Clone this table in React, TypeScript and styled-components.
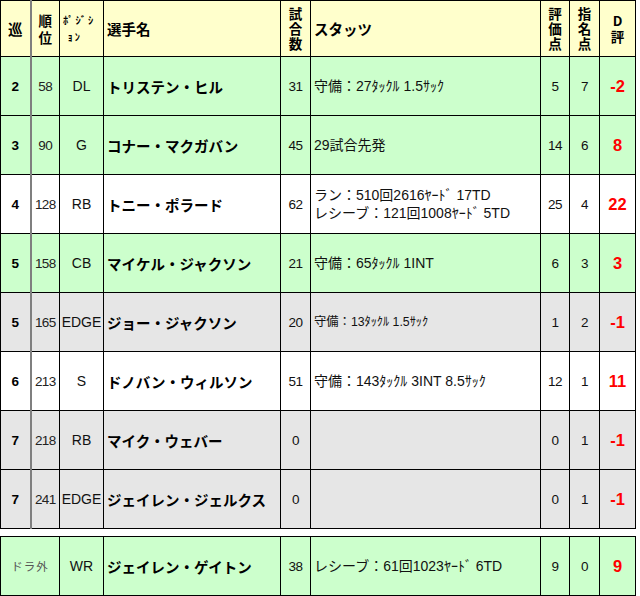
import styled, { createGlobalStyle } from "styled-components"
import { FC, ReactNode } from "react"

const GlobalStyle = createGlobalStyle`
    html, body { margin: 0; padding: 0; background: #fff; }
    body { font-family: "Liberation Sans", "Noto Sans CJK JP", sans-serif; color: #000; }
`

const colors = {
    head: '#FFFFCC',
    green: '#CCFFCC',
    white: '#FFFFFF',
    grey: '#E6E6E6',
    red: '#FF0000',
} as const

type Bg = 'green' | 'white' | 'grey'

const Page = styled.div({
    display: 'flex',
    flexDirection: 'column',
    gap: 7,
    width: 636,
})

const Table = styled.table({
    borderCollapse: 'collapse',
    tableLayout: 'fixed',
    width: 636,
})

const Col = styled.col<{ $w: number }>(p => ({ width: p.$w }))

const HeadRow = styled.tr({
    height: 56,
    backgroundColor: colors.head,
})

const Row = styled.tr<{ $bg: Bg }>(p => ({
    height: 59,
    backgroundColor: colors[p.$bg],
}))

const baseCell = {
    border: '1px solid #000',
    padding: 0,
    verticalAlign: 'middle' as const,
    overflow: 'hidden',
    whiteSpace: 'nowrap' as const,
}

const Th = styled.th<{ $left?: boolean; $grey?: boolean }>(p => ({
    ...baseCell,
    borderRight: p.$grey ? '2px solid #7f7f7f' : baseCell.border,
    textAlign: p.$left ? 'left' : 'center',
    paddingLeft: p.$left ? 3 : 0,
    fontFamily: '"Noto Sans CJK JP", sans-serif',
    fontWeight: 700,
    fontSize: 14.5,
    lineHeight: '17px',
}))

// one character per line, for the narrow header columns
const Stack = styled.span<{ $gap?: number }>(p => ({
    display: 'flex',
    flexDirection: 'column',
    alignItems: 'center',
    gap: p.$gap ?? 0,
    fontSize: 13.5,
    lineHeight: '15px',
}))

const SmallHead = styled.span({
    display: 'flex',
    flexDirection: 'column',
    alignItems: 'flex-start',
    gap: 5,
    fontSize: 10.5,
    lineHeight: '12px',
    letterSpacing: 2,
    paddingLeft: 3,
})

const Td = styled.td<{ $grey?: boolean }>(p => ({
    ...baseCell,
    borderRight: p.$grey ? '2px solid #7f7f7f' : baseCell.border,
    textAlign: 'center',
    fontSize: 13.5,
}))

const Round = styled(Td)({
    fontWeight: 700,
})

const Rank = styled(Td)({
    fontSize: 13.5,
    letterSpacing: -0.6,
    color: '#222',
})

const Pos = styled(Td)({
    fontSize: 14,
    color: '#111',
})

const Name = styled(Td)({
    textAlign: 'left',
    paddingLeft: 3,
    fontFamily: '"Noto Sans CJK JP", sans-serif',
    fontWeight: 700,
    fontSize: 14.5,
})

const Stats = styled(Td)<{ $small?: boolean }>(p => ({
    textAlign: 'left',
    paddingLeft: 3,
    fontFamily: '"Liberation Sans", "Noto Sans CJK JP", sans-serif',
    fontSize: p.$small ? 12.3 : 14,
    lineHeight: '18px',
    color: '#111',
}))

const Num = styled(Td)({
    fontSize: 13.5,
    letterSpacing: -0.6,
    color: '#111',
})

const Score = styled(Td)({
    color: colors.red,
    fontWeight: 700,
    fontSize: 16.5,
})

const Outside = styled(Td)({
    fontFamily: '"Noto Sans CJK JP", sans-serif',
    fontSize: 11.5,
    color: '#555',
    letterSpacing: 1,
})

interface Pick {
    round: string
    rank: string
    pos: string
    name: string
    games: string
    stats: ReactNode
    small?: boolean
    evalPt: string
    draftPt: string
    d: string
    bg: Bg
}

const picks: Pick[] = [
    { round: '2', rank: '58', pos: 'DL', name: 'トリステン・ヒル', games: '31', stats: '守備：27ﾀｯｸﾙ 1.5ｻｯｸ', evalPt: '5', draftPt: '7', d: '-2', bg: 'green' },
    { round: '3', rank: '90', pos: 'G', name: 'コナー・マクガバン', games: '45', stats: '29試合先発', evalPt: '14', draftPt: '6', d: '8', bg: 'green' },
    { round: '4', rank: '128', pos: 'RB', name: 'トニー・ポラード', games: '62', stats: <>ラン：510回2616ﾔｰﾄﾞ 17TD<br />レシーブ：121回1008ﾔｰﾄﾞ 5TD</>, evalPt: '25', draftPt: '4', d: '22', bg: 'white' },
    { round: '5', rank: '158', pos: 'CB', name: 'マイケル・ジャクソン', games: '21', stats: '守備：65ﾀｯｸﾙ 1INT', evalPt: '6', draftPt: '3', d: '3', bg: 'green' },
    { round: '5', rank: '165', pos: 'EDGE', name: 'ジョー・ジャクソン', games: '20', stats: '守備：13ﾀｯｸﾙ 1.5ｻｯｸ', small: true, evalPt: '1', draftPt: '2', d: '-1', bg: 'grey' },
    { round: '6', rank: '213', pos: 'S', name: 'ドノバン・ウィルソン', games: '51', stats: '守備：143ﾀｯｸﾙ 3INT 8.5ｻｯｸ', evalPt: '12', draftPt: '1', d: '11', bg: 'white' },
    { round: '7', rank: '218', pos: 'RB', name: 'マイク・ウェバー', games: '0', stats: '', evalPt: '0', draftPt: '1', d: '-1', bg: 'grey' },
    { round: '7', rank: '241', pos: 'EDGE', name: 'ジェイレン・ジェルクス', games: '0', stats: '', evalPt: '0', draftPt: '1', d: '-1', bg: 'grey' },
]

const widths = [30, 29, 44, 177, 30, 230, 29, 30, 36]

const Cols: FC = () => <colgroup>
    {widths.map((w, i) => <Col key={i} $w={w} />)}
</colgroup>

const PickRow: FC<{ p: Pick }> = ({ p }) => <Row $bg={p.bg}>
    <Round $grey>{p.round}</Round>
    <Rank>{p.rank}</Rank>
    <Pos>{p.pos}</Pos>
    <Name>{p.name}</Name>
    <Num>{p.games}</Num>
    <Stats $small={p.small}>{p.stats}</Stats>
    <Num>{p.evalPt}</Num>
    <Num>{p.draftPt}</Num>
    <Score>{p.d}</Score>
</Row>

const chars = (s: string) => s.split('').map((c, i) => <span key={i}>{c}</span>)

export default function App() {
    return <>
        <GlobalStyle />
        <Page>
            <Table>
                <Cols />
                <thead>
                    <HeadRow>
                        <Th $grey>巡</Th>
                        <Th><Stack $gap={2}>{chars('順位')}</Stack></Th>
                        <Th><SmallHead><span>ﾎﾟｼﾞｼ</span><span>&nbsp;ｮﾝ</span></SmallHead></Th>
                        <Th $left>選手名</Th>
                        <Th><Stack>{chars('試合数')}</Stack></Th>
                        <Th $left>スタッツ</Th>
                        <Th><Stack>{chars('評価点')}</Stack></Th>
                        <Th><Stack>{chars('指名点')}</Stack></Th>
                        <Th><Stack $gap={1}>{chars('D評')}</Stack></Th>
                    </HeadRow>
                </thead>
                <tbody>
                    {picks.map((p, i) => <PickRow key={i} p={p} />)}
                </tbody>
            </Table>
            <Table>
                <Cols />
                <tbody>
                    <Row $bg="green">
                        <Outside colSpan={2}>ドラ外</Outside>
                        <Pos>WR</Pos>
                        <Name>ジェイレン・ゲイトン</Name>
                        <Num>38</Num>
                        <Stats>レシーブ：61回1023ﾔｰﾄﾞ 6TD</Stats>
                        <Num>9</Num>
                        <Num>0</Num>
                        <Score>9</Score>
                    </Row>
                </tbody>
            </Table>
        </Page>
    </>
}
